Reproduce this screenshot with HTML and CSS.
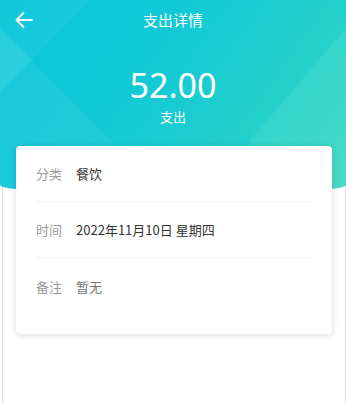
FILE: index.html
```html
<!DOCTYPE html>
<html lang="zh-CN">

<head>
    <meta charset="UTF-8">
    <meta name="viewport" content="width=device-width, initial-scale=1.0">
    <title>支出详情</title>
    <link rel="stylesheet" href="styles.css">
</head>

<body>
    <div class="page">
        <div class="header">
            <svg class="header-bg" viewBox="0 0 346 195" preserveAspectRatio="none">
                <polygon points="0,0 90,0 32,60 0,28" fill="#fff" opacity="0.04" />
                <polygon points="0,28 32,60 0,92" fill="#fff" opacity="0.12" />
                <polygon points="0,92 32,60 120,150 30,195 0,195" fill="#fff" opacity="0.05" />
                <polygon points="346,28 346,195 240,195 250,140" fill="#fff" opacity="0.07" />
            </svg>
            <div class="nav">
                <button class="back-btn">
                    <svg width="20" height="20" viewBox="0 0 20 20">
                        <path d="M18 10H2.5M9.5 3L2.5 10l7 7" fill="none" stroke="#fff" stroke-width="1.8" stroke-linecap="round" stroke-linejoin="round" />
                    </svg>
                </button>
                <h1 class="nav-title">支出详情</h1>
            </div>
            <div class="summary">
                <div class="amount">52.00</div>
                <div class="type">支出</div>
            </div>
        </div>

        <div class="card">
            <div class="row">
                <span class="label">分类</span>
                <span class="value">餐饮</span>
            </div>
            <div class="row">
                <span class="label">时间</span>
                <span class="value">2022年11月10日 星期四</span>
            </div>
            <div class="row">
                <span class="label">备注</span>
                <span class="value muted">暂无</span>
            </div>
        </div>
    </div>
</body>

</html>
```

FILE: styles.css
```css
body {
    margin: 0;
    font-family: "Noto Sans CJK SC", "Noto Sans", sans-serif;
    background-color: #fff;
}

.page {
    margin-left: 2px;
    width: 342px;
    min-height: 403px;
    border-left: 1px solid #e2e2e2;
    border-right: 1px solid #e2e2e2;
    background-color: #fff;
}

.header {
    position: relative;
    margin: 0 -1px 0 -3px;
    height: 195px;
    background: linear-gradient(125deg, #0ac5db 0%, #12c9d5 40%, #22d0cb 70%, #3cd8c1 100%);
    border-radius: 0 0 50% 50% / 0 0 10px 10px;
    overflow: hidden;
    color: #fff;
}

.header-bg {
    position: absolute;
    top: 0;
    left: 0;
    width: 100%;
    height: 100%;
}

.nav {
    position: relative;
    height: 40px;
    display: flex;
    align-items: center;
    justify-content: center;
}

.back-btn {
    position: absolute;
    left: 14px;
    top: 10px;
    padding: 0;
    border: none;
    background: none;
    display: flex;
}

.nav-title {
    margin: 0;
    font-size: 15px;
    font-weight: normal;
    line-height: 40px;
}

.summary {
    position: relative;
    display: flex;
    flex-direction: column;
    align-items: center;
    padding-top: 23px;
}

.amount {
    font-size: 34px;
    line-height: 44px;
    font-family: "Noto Sans", "Noto Sans CJK SC", sans-serif;
}

.type {
    font-size: 13px;
    line-height: 18px;
    margin-top: 1px;
}

.card {
    position: relative;
    margin: -49px 13px 0 13px;
    padding: 0 20px 20px;
    background-color: #fff;
    border-radius: 4px;
    box-shadow: 0 1px 6px rgba(0, 0, 0, 0.15);
}

.row {
    display: flex;
    align-items: center;
    gap: 14px;
    height: 56px;
    font-size: 13px;
    border-bottom: 1px solid #f2f2f2;
    box-sizing: border-box;
}

.row:last-child {
    border-bottom: none;
}

.label {
    color: #9a9a9a;
}

.value {
    color: #333;
}

.value.muted {
    color: #777;
}
```
